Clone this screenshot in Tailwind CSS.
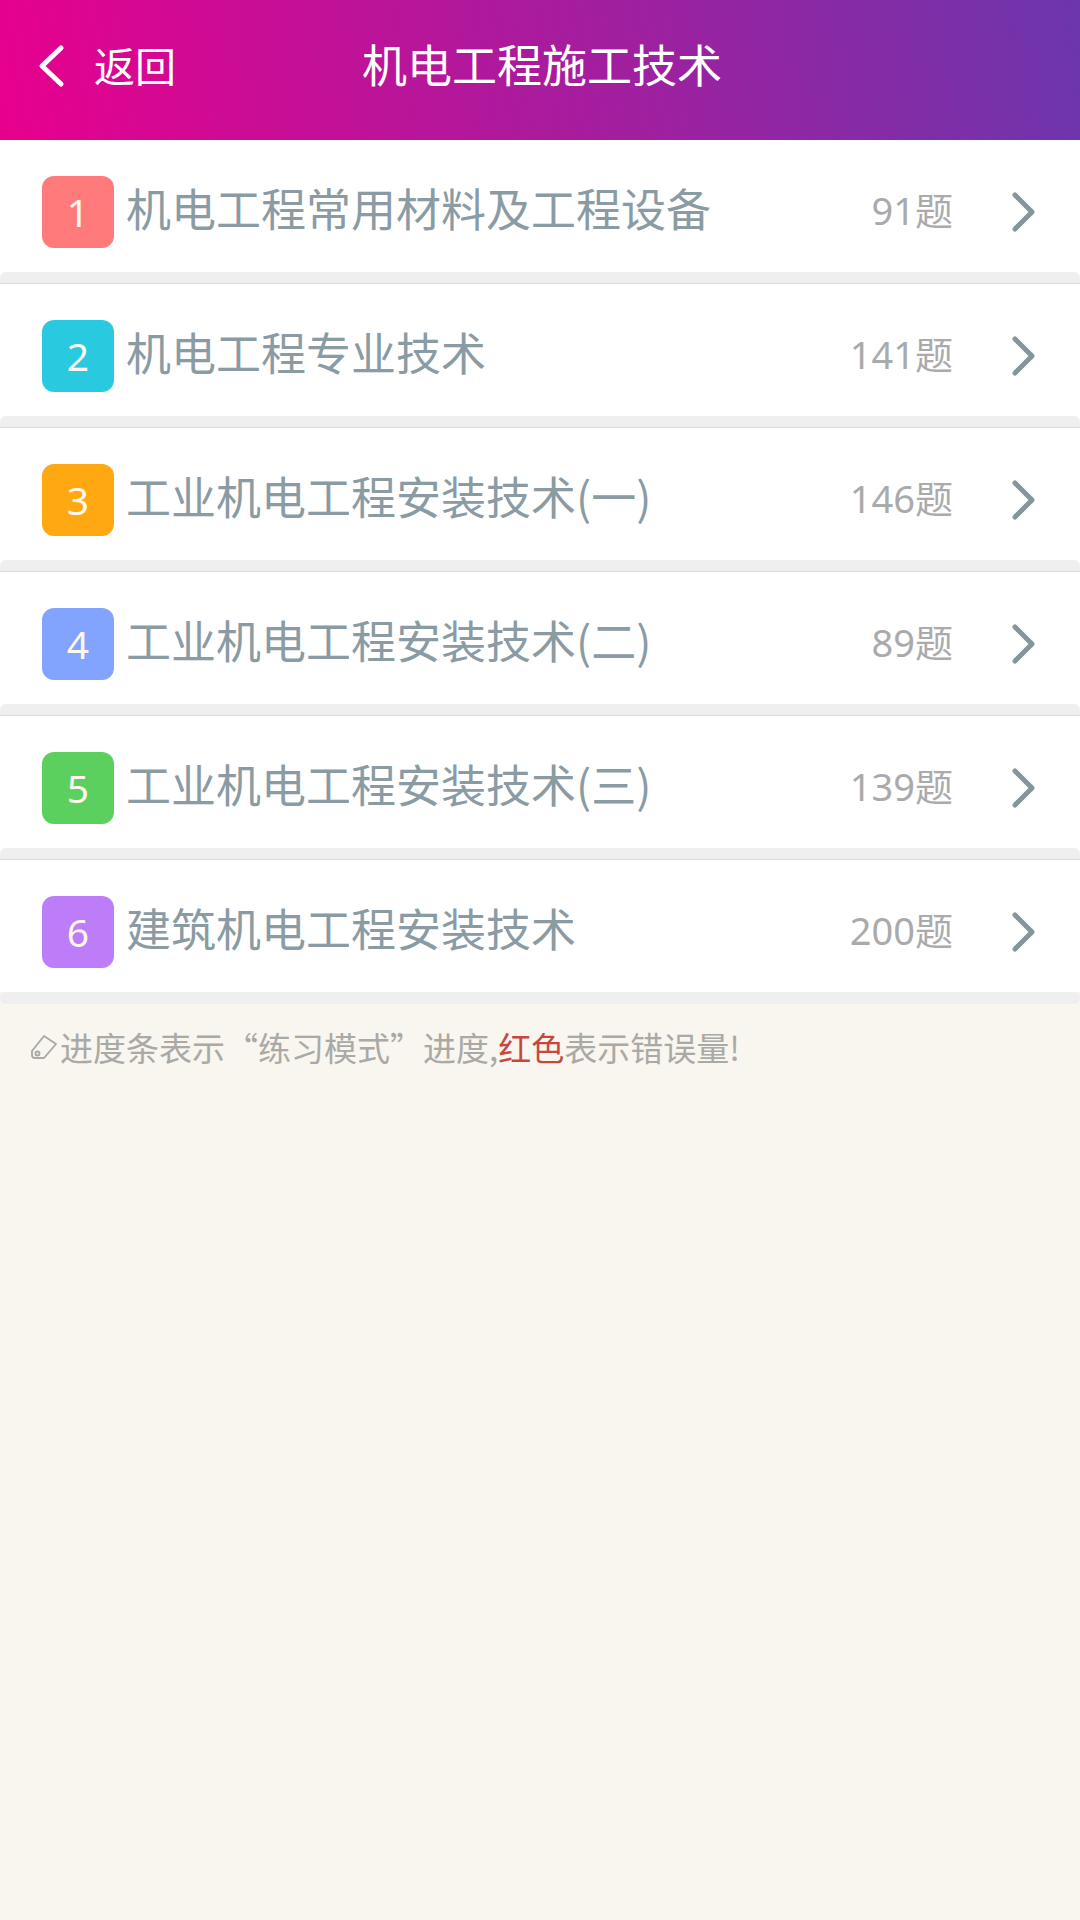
<!DOCTYPE html>
<html lang="zh-CN">
  <head>
    <meta charset="UTF-8" />
    <meta name="viewport" content="width=device-width, initial-scale=1.0" />
    <title>机电工程施工技术</title>
    <script src="https://cdn.jsdelivr.net/npm/@tailwindcss/browser@4"></script>
  </head>
  <body class="w-[1080px] h-[1920px] overflow-hidden bg-[#f9f5ef] font-['Noto_Sans_CJK_SC','Noto_Sans',sans-serif]">

    <!-- Header -->
    <header class="relative flex items-center h-[140px] bg-[linear-gradient(80deg,#e8008e_0%,#6c36ac_100%)] text-white">
      <svg class="ml-[38px] mb-[8px] w-[28px] h-[44px]" viewBox="0 0 28 44" fill="none" stroke="#ffffff" stroke-width="5" stroke-linecap="round" stroke-linejoin="round">
        <path d="M23 4 L4 22 L23 40" />
      </svg>
      <span class="ml-[28px] mb-[12px] text-[41px] leading-none">返回</span>
      <h1 class="absolute left-[362px] top-[41px] text-[45px] leading-none font-normal">机电工程施工技术</h1>
    </header>

    <!-- Chapter list -->
    <main class="flex flex-col">
      <div class="h-[144px] bg-white">
        <a class="flex items-center h-[132px] pt-[12px] pl-[42px] pr-[44px] bg-white">
          <span class="flex items-center justify-center w-[72px] h-[72px] rounded-[12px] bg-[#ff7b7b] text-[#fff6ee] text-[39px] font-['Noto_Sans',sans-serif]">1</span>
          <span class="ml-[12px] pb-[10px] flex-1 text-[45px] leading-none text-[#8a9ba3]">机电工程常用材料及工程设备</span>
          <span class="pb-[4px] text-[38px] leading-none text-[#aaaaaa] font-['Noto_Sans','Noto_Sans_CJK_SC',sans-serif]">91题</span>
          <svg class="ml-[57px] w-[26px] h-[40px]" viewBox="0 0 26 40" fill="none" stroke="#84969b" stroke-width="5" stroke-linecap="round" stroke-linejoin="round"><path d="M5 3 L22 20 L5 37" /></svg>
        </a>
        <div class="h-[12px] rounded-t-[6px] bg-[#efefef] border-b border-[#d9d9d9]"></div>
      </div>
      <div class="h-[144px] bg-white">
        <a class="flex items-center h-[132px] pt-[12px] pl-[42px] pr-[44px] bg-white">
          <span class="flex items-center justify-center w-[72px] h-[72px] rounded-[12px] bg-[#29c9e0] text-[#fff6ee] text-[39px] font-['Noto_Sans',sans-serif]">2</span>
          <span class="ml-[12px] pb-[10px] flex-1 text-[45px] leading-none text-[#8a9ba3]">机电工程专业技术</span>
          <span class="pb-[4px] text-[38px] leading-none text-[#aaaaaa] font-['Noto_Sans','Noto_Sans_CJK_SC',sans-serif]">141题</span>
          <svg class="ml-[57px] w-[26px] h-[40px]" viewBox="0 0 26 40" fill="none" stroke="#84969b" stroke-width="5" stroke-linecap="round" stroke-linejoin="round"><path d="M5 3 L22 20 L5 37" /></svg>
        </a>
        <div class="h-[12px] rounded-t-[6px] bg-[#efefef] border-b border-[#d9d9d9]"></div>
      </div>
      <div class="h-[144px] bg-white">
        <a class="flex items-center h-[132px] pt-[12px] pl-[42px] pr-[44px] bg-white">
          <span class="flex items-center justify-center w-[72px] h-[72px] rounded-[12px] bg-[#ffa812] text-[#fff6ee] text-[39px] font-['Noto_Sans',sans-serif]">3</span>
          <span class="ml-[12px] pb-[10px] flex-1 text-[45px] leading-none text-[#8a9ba3]">工业机电工程安装技术(一)</span>
          <span class="pb-[4px] text-[38px] leading-none text-[#aaaaaa] font-['Noto_Sans','Noto_Sans_CJK_SC',sans-serif]">146题</span>
          <svg class="ml-[57px] w-[26px] h-[40px]" viewBox="0 0 26 40" fill="none" stroke="#84969b" stroke-width="5" stroke-linecap="round" stroke-linejoin="round"><path d="M5 3 L22 20 L5 37" /></svg>
        </a>
        <div class="h-[12px] rounded-t-[6px] bg-[#efefef] border-b border-[#d9d9d9]"></div>
      </div>
      <div class="h-[144px] bg-white">
        <a class="flex items-center h-[132px] pt-[12px] pl-[42px] pr-[44px] bg-white">
          <span class="flex items-center justify-center w-[72px] h-[72px] rounded-[12px] bg-[#82a4ff] text-[#fff6ee] text-[39px] font-['Noto_Sans',sans-serif]">4</span>
          <span class="ml-[12px] pb-[10px] flex-1 text-[45px] leading-none text-[#8a9ba3]">工业机电工程安装技术(二)</span>
          <span class="pb-[4px] text-[38px] leading-none text-[#aaaaaa] font-['Noto_Sans','Noto_Sans_CJK_SC',sans-serif]">89题</span>
          <svg class="ml-[57px] w-[26px] h-[40px]" viewBox="0 0 26 40" fill="none" stroke="#84969b" stroke-width="5" stroke-linecap="round" stroke-linejoin="round"><path d="M5 3 L22 20 L5 37" /></svg>
        </a>
        <div class="h-[12px] rounded-t-[6px] bg-[#efefef] border-b border-[#d9d9d9]"></div>
      </div>
      <div class="h-[144px] bg-white">
        <a class="flex items-center h-[132px] pt-[12px] pl-[42px] pr-[44px] bg-white">
          <span class="flex items-center justify-center w-[72px] h-[72px] rounded-[12px] bg-[#5bd05e] text-[#fff6ee] text-[39px] font-['Noto_Sans',sans-serif]">5</span>
          <span class="ml-[12px] pb-[10px] flex-1 text-[45px] leading-none text-[#8a9ba3]">工业机电工程安装技术(三)</span>
          <span class="pb-[4px] text-[38px] leading-none text-[#aaaaaa] font-['Noto_Sans','Noto_Sans_CJK_SC',sans-serif]">139题</span>
          <svg class="ml-[57px] w-[26px] h-[40px]" viewBox="0 0 26 40" fill="none" stroke="#84969b" stroke-width="5" stroke-linecap="round" stroke-linejoin="round"><path d="M5 3 L22 20 L5 37" /></svg>
        </a>
        <div class="h-[12px] rounded-t-[6px] bg-[#efefef] border-b border-[#d9d9d9]"></div>
      </div>
      <div class="h-[144px]">
        <a class="flex items-center h-[132px] pt-[12px] pl-[42px] pr-[44px] bg-white">
          <span class="flex items-center justify-center w-[72px] h-[72px] rounded-[12px] bg-[#bd7df8] text-[#fff6ee] text-[39px] font-['Noto_Sans',sans-serif]">6</span>
          <span class="ml-[12px] pb-[10px] flex-1 text-[45px] leading-none text-[#8a9ba3]">建筑机电工程安装技术</span>
          <span class="pb-[4px] text-[38px] leading-none text-[#aaaaaa] font-['Noto_Sans','Noto_Sans_CJK_SC',sans-serif]">200题</span>
          <svg class="ml-[57px] w-[26px] h-[40px]" viewBox="0 0 26 40" fill="none" stroke="#84969b" stroke-width="5" stroke-linecap="round" stroke-linejoin="round"><path d="M5 3 L22 20 L5 37" /></svg>
        </a>
        <div class="h-[12px] rounded-[6px] bg-[#efefef]"></div>
      </div>
    </main>

    <!-- Hint -->
    <p class="flex items-center mt-[21px] pl-[29px] text-[33px] leading-[44px] text-[#a9a9a6]">
      <svg class="shrink-0 w-[29px] h-[26px] mr-[2px]" viewBox="0 0 29 26" fill="none" stroke="#a9a9a6" stroke-width="1.9" stroke-linejoin="round">
        <path d="M15 2 L27 10 L15 24 H6 Q3 24 3 21 V17 Z" />
        <circle cx="8.5" cy="19.5" r="2" />
      </svg>
      <span>进度条表示“练习模式”进度,<span class="text-[#c9463f]">红色</span>表示错误量!</span>
    </p>
  </body>
</html>
